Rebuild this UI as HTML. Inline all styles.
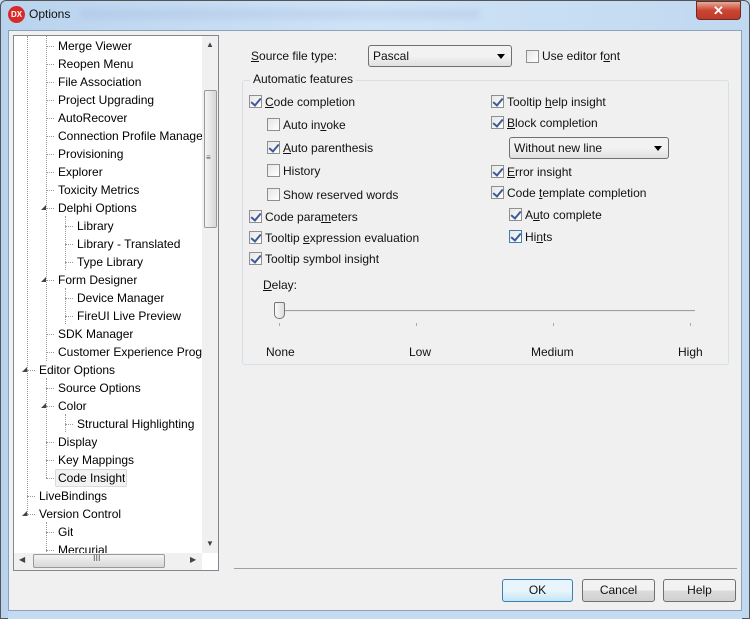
<!DOCTYPE html>
<html><head><style>
*{margin:0;padding:0;box-sizing:border-box}
body{width:750px;height:619px;overflow:hidden;background:#c4dbf1;font-family:"Liberation Sans",sans-serif;font-size:12px;color:#111;position:relative}
.a{position:absolute;white-space:nowrap}
.frame{position:absolute;left:0;top:0;width:750px;height:619px;background:linear-gradient(90deg,#b9d3ee,#cfe3f7 50%,#c0d8f0);border:1px solid #555;border-radius:6px 6px 0 0}
.client{position:absolute;left:8px;top:30px;width:734px;height:581px;background:#f0f0f0;border:1px solid #8da2b8}
.tree{position:absolute;left:13px;top:35px;width:206px;height:536px;background:#fff;border:1px solid #828790;overflow:hidden}
.cb{position:absolute;width:13px;height:13px;border:1px solid #8f8f8f;background:linear-gradient(135deg,#e6e6e6,#fff)}
.cb.c::after{content:"";position:absolute;left:3px;top:0px;width:4px;height:8px;border:solid #3d5a9a;border-width:0 2px 2px 0;transform:rotate(40deg)}
.btn{position:absolute;height:23px;border:1px solid #707070;border-radius:3px;background:linear-gradient(#f2f2f2 50%,#dcdcdc 50%,#d0d0d0);text-align:center;line-height:21px}
.dd{position:absolute;height:22px;border:1px solid #707070;border-radius:3px;background:linear-gradient(#f2f2f2 50%,#e0e0e0);padding-left:4px;line-height:20px}
.dd::after{content:"";position:absolute;right:6px;top:8px;border:4px solid transparent;border-top:5px solid #000;border-bottom:0}
.dot{position:absolute;border-left:1px dotted #999}
.hd{position:absolute;border-top:1px dotted #999;width:8px}
.tri{position:absolute;width:0;height:0;border-left:5px solid transparent;border-bottom:5px solid #444}
#t .a{color:#000}
</style></head><body>
<div class="frame"></div>
<div class="a" style="left:8px;top:6px;width:17px;height:17px;border-radius:50%;background:#d92a2a;color:#fff;font-size:8px;font-weight:bold;text-align:center;line-height:17px">DX</div>
<div class="a" style="left:29px;top:7px;font-size:12px">Options</div>
<div class="a" style="left:80px;top:9px;width:400px;height:10px;background:rgba(150,170,210,.2);filter:blur(3px)"></div>
<div class="a" style="left:696px;top:1px;width:45px;height:19px;border:1px solid #6d2a23;border-radius:0 0 4px 4px;background:linear-gradient(#e9a99a,#c9452f 50%,#c0392b);color:#fff;text-align:center;font-weight:bold;line-height:17px;font-size:13px">✕</div>
<div class="client"></div>
<div class="tree">
<div class="dot" style="left:13px;top:0;height:480px"></div>
<div class="dot" style="left:32px;top:0;height:325px"></div>
<div class="dot" style="left:51px;top:180px;height:54px"></div>
<div class="dot" style="left:51px;top:252px;height:36px"></div>
<div class="dot" style="left:32px;top:342px;height:100px"></div>
<div class="dot" style="left:51px;top:378px;height:18px"></div>
<div class="dot" style="left:32px;top:486px;height:50px"></div>
</div>
<div id="t"></div>
<div class="a" style="left:202px;top:36px;width:16px;height:517px;background:#f0f0f0"></div>
<div class="a" style="left:204px;top:90px;width:13px;height:138px;border:1px solid #999;border-radius:2px;background:linear-gradient(90deg,#f3f3f3,#d8d8d8)"></div>
<div class="a" style="left:206px;top:153px;font-size:8px;color:#555">≡</div>
<div class="a" style="left:206px;top:40px;font-size:8px;color:#444">▲</div>
<div class="a" style="left:206px;top:539px;font-size:8px;color:#444">▼</div>
<div class="a" style="left:14px;top:553px;width:188px;height:17px;background:#f0f0f0"></div>
<div class="a" style="left:33px;top:554px;width:132px;height:14px;border:1px solid #999;border-radius:2px;background:linear-gradient(#f3f3f3,#d8d8d8)"></div>
<div class="a" style="left:93px;top:553px;font-size:9px;color:#555">III</div>
<div class="a" style="left:19px;top:555px;font-size:8px;color:#444">◀</div>
<div class="a" style="left:190px;top:555px;font-size:8px;color:#444">▶</div>

<div class="a" style="left:251px;top:49px"><u>S</u>ource file type:</div>
<div class="dd" style="left:368px;top:45px;width:144px">Pascal</div>
<div class="cb" style="left:526px;top:50px"></div>
<div class="a" style="left:542px;top:49px">Use editor f<u>o</u>nt</div>
<div class="a" style="left:242px;top:80px;width:487px;height:285px;border:1px solid #d5dfe5;border-radius:3px"></div>
<div class="a" style="left:250px;top:72px;background:#f0f0f0;padding:0 3px">Automatic features</div>

<div class="cb c" style="left:249px;top:95px"></div><div class="a" style="left:265px;top:95px"><u>C</u>ode completion</div>
<div class="cb" style="left:267px;top:118px"></div><div class="a" style="left:283px;top:118px">Auto in<u>v</u>oke</div>
<div class="cb c" style="left:267px;top:141px"></div><div class="a" style="left:283px;top:141px"><u>A</u>uto parenthesis</div>
<div class="cb" style="left:267px;top:164px"></div><div class="a" style="left:283px;top:164px">History</div>
<div class="cb" style="left:267px;top:188px"></div><div class="a" style="left:283px;top:188px">Show reserved words</div>
<div class="cb c" style="left:249px;top:210px"></div><div class="a" style="left:265px;top:210px">Code para<u>m</u>eters</div>
<div class="cb c" style="left:249px;top:231px"></div><div class="a" style="left:265px;top:231px">Tooltip <u>e</u>xpression evaluation</div>
<div class="cb c" style="left:249px;top:252px"></div><div class="a" style="left:265px;top:252px">Tooltip symbol insight</div>

<div class="cb c" style="left:491px;top:95px"></div><div class="a" style="left:507px;top:95px">Tooltip <u>h</u>elp insight</div>
<div class="cb c" style="left:491px;top:116px"></div><div class="a" style="left:507px;top:116px"><u>B</u>lock completion</div>
<div class="dd" style="left:509px;top:137px;width:160px">Without new line</div>
<div class="cb c" style="left:491px;top:165px"></div><div class="a" style="left:507px;top:165px"><u>E</u>rror insight</div>
<div class="cb c" style="left:491px;top:186px"></div><div class="a" style="left:507px;top:186px">Code <u>t</u>emplate completion</div>
<div class="cb c" style="left:509px;top:208px"></div><div class="a" style="left:525px;top:208px">A<u>u</u>to complete</div>
<div class="cb c" style="left:509px;top:230px;border-color:#3c7fb1"></div><div class="a" style="left:525px;top:230px">Hi<u>n</u>ts</div>

<div class="a" style="left:263px;top:278px"><u>D</u>elay:</div>
<div class="a" style="left:279px;top:310px;width:416px;height:2px;border-top:1px solid #a0a0a0;border-bottom:1px solid #e6e6e6"></div>
<div class="a" style="left:274px;top:302px;width:11px;height:17px;border:1px solid #777;border-radius:2px 2px 5px 5px;background:linear-gradient(90deg,#fafafa,#ddd)"></div>
<div class="a" style="left:279px;top:323px;width:1px;height:3px;background:#aaa"></div>
<div class="a" style="left:416px;top:323px;width:1px;height:3px;background:#aaa"></div>
<div class="a" style="left:553px;top:323px;width:1px;height:3px;background:#aaa"></div>
<div class="a" style="left:690px;top:323px;width:1px;height:3px;background:#aaa"></div>
<div class="a" style="left:266px;top:345px">None</div>
<div class="a" style="left:409px;top:345px">Low</div>
<div class="a" style="left:531px;top:345px">Medium</div>
<div class="a" style="left:678px;top:345px">High</div>

<div class="a" style="left:234px;top:568px;width:503px;height:1px;background:#a0a0a0"></div>
<div class="btn" style="left:502px;top:579px;width:71px;border-color:#3c7fb1;background:linear-gradient(#e9f5fc 50%,#c4e5f6)">OK</div>
<div class="btn" style="left:582px;top:579px;width:73px">Cancel</div>
<div class="btn" style="left:663px;top:579px;width:73px">Help</div>
<div class="a" style="left:8px;top:611px;width:734px;height:8px;background:#c4dbf1"></div>

<script>
var items=[[1,"Merge Viewer"],[1,"Reopen Menu"],[1,"File Association"],[1,"Project Upgrading"],[1,"AutoRecover"],[1,"Connection Profile Manage"],[1,"Provisioning"],[1,"Explorer"],[1,"Toxicity Metrics"],[1,"Delphi Options",1],[2,"Library"],[2,"Library - Translated"],[2,"Type Library"],[1,"Form Designer",1],[2,"Device Manager"],[2,"FireUI Live Preview"],[1,"SDK Manager"],[1,"Customer Experience Progr"],[0,"Editor Options",1],[1,"Source Options"],[1,"Color",1],[2,"Structural Highlighting"],[1,"Display"],[1,"Key Mappings"],[1,"Code Insight",0,1],[0,"LiveBindings"],[0,"Version Control",1],[1,"Git"],[1,"Mercurial"]];
var h="";
items.forEach(function(it,i){var y=38+i*18,x=39+it[0]*19;
if(y<545){
h+='<div class="hd" style="left:'+(x-12)+'px;top:'+(y+8)+'px"></div>';
if(it[2])h+='<div class="tri" style="left:'+(x-17)+'px;top:'+(y+5)+'px"></div>';
if(it[3])h+='<div class="a" style="left:'+(x-3)+'px;top:'+(y-1)+'px;width:72px;height:18px;border:1px solid #d9d9d9;border-radius:2px;background:#f2f2f2"></div>';}
if(y<553){
h+='<div class="a" style="left:'+x+'px;top:'+(y+1)+'px;height:'+(Math.min(16,553-y-1))+'px;overflow:hidden;max-width:'+(202-x)+'px">'+it[1]+'</div>';}
});
document.getElementById("t").innerHTML=h;
</script>
</body></html>
